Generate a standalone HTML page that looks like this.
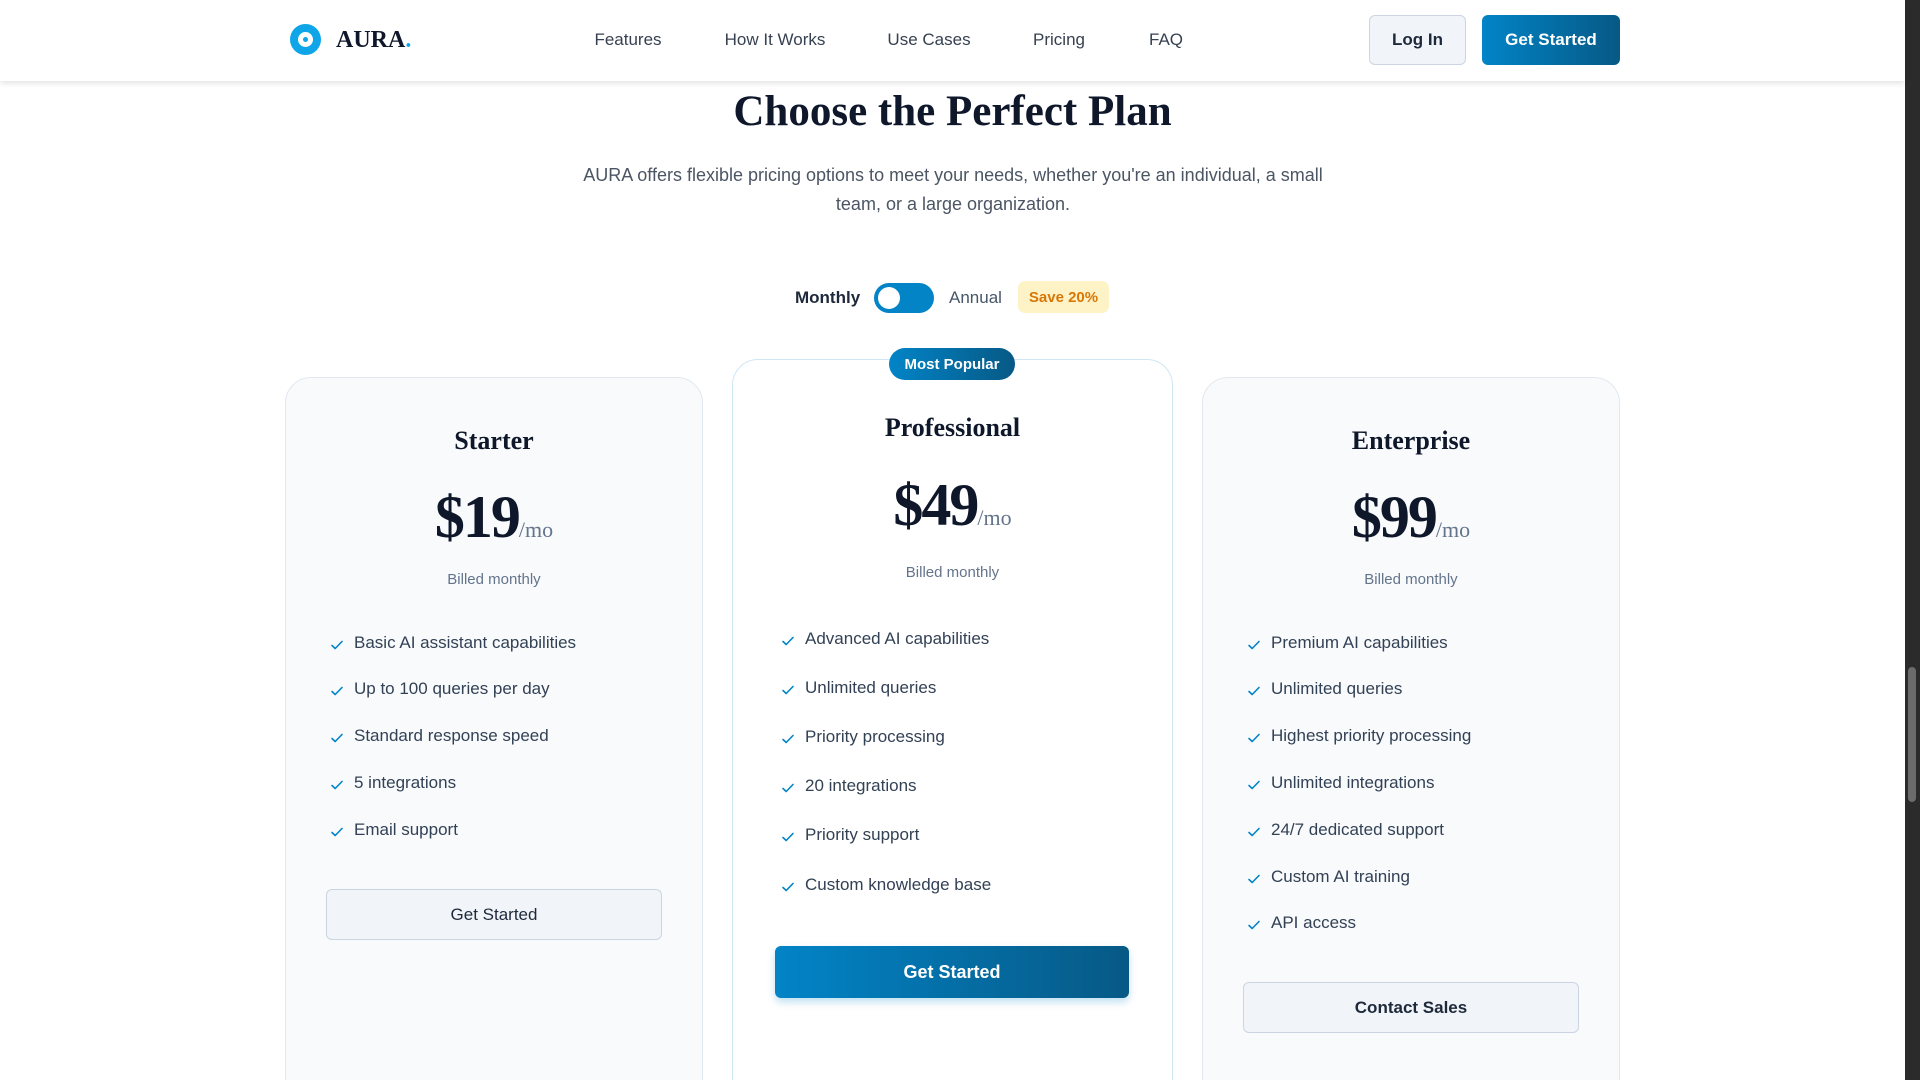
<!DOCTYPE html>
<html><head><meta charset="utf-8"><style>
*{box-sizing:border-box;margin:0;padding:0}
html,body{width:1920px;height:1080px;overflow:hidden}
body{background:#fff;font-family:"Liberation Sans",sans-serif;color:#0f172a}
#w{position:relative;width:1920px;height:1080px;overflow:hidden}
.a{position:absolute}
.serif{font-family:"Liberation Serif",serif;font-weight:bold}
nav{position:absolute;left:0;top:0;width:1905px;height:81px;background:#fff;box-shadow:0 2px 6px rgba(0,0,0,.12);z-index:2}
.nl{position:absolute;top:30px;font-size:17px;color:#374151;transform:translateX(-50%)}
.btn{position:absolute;display:flex;align-items:center;justify-content:center;font-size:17px;font-weight:bold;border-radius:6px}
.card{position:absolute;border:1px solid #e2e8f0;border-radius:26px;background:#f8fafc;height:900px}
.ct{position:absolute;width:100%;text-align:center}
.feat{position:absolute;font-size:17px;color:#334155;white-space:nowrap}
.feat svg{position:absolute;left:-24px;top:5px}
.price{font-family:"Liberation Serif",serif;font-weight:bold;font-size:60px;letter-spacing:-2px}
.price small{font-size:22px;font-weight:normal;color:#64748b;letter-spacing:0}
.bill{font-size:15px;color:#64748b}
</style></head><body><div id="w">
<nav>
<div class="a" style="left:290px;top:24px;width:31px;height:31px;border-radius:50%;background:#0ea5e9"></div>
<div class="a" style="left:298px;top:32px;width:15px;height:15px;border-radius:50%;background:#fff"></div>
<div class="a" style="left:303px;top:37px;width:5px;height:5px;border-radius:50%;background:#0ea5e9"></div>
<div class="a serif" style="left:336px;top:27px;font-size:24px;color:#0f172a">AURA<span style="color:#0ea5e9">.</span></div>
<div class="nl" style="left:628px">Features</div>
<div class="nl" style="left:775px">How It Works</div>
<div class="nl" style="left:929px">Use Cases</div>
<div class="nl" style="left:1059px">Pricing</div>
<div class="nl" style="left:1166px">FAQ</div>
<div class="btn" style="left:1369px;top:15px;width:97px;height:50px;background:#f1f5f9;border:1px solid #cbd5e1;color:#1e293b">Log In</div>
<div class="btn" style="left:1482px;top:15px;width:138px;height:50px;background:linear-gradient(90deg,#0284c7,#075985);color:#fff">Get Started</div>
</nav>
<div class="a" style="left:1905px;top:0;width:15px;height:1080px;background:#2b2b2b"></div>
<div class="a" style="left:1908px;top:667px;width:8px;height:135px;background:#6b6b6b;border-radius:4px"></div>

<div class="a serif" style="left:0;width:1905px;top:87px;text-align:center;font-size:43px;color:#0f172a">Choose the Perfect Plan</div>
<div class="a" style="left:568px;width:770px;top:161px;text-align:center;font-size:18px;line-height:29px;color:#4b5563">AURA offers flexible pricing options to meet your needs, whether you're an individual, a small<br>team, or a large organization.</div>

<div class="a" style="left:795px;top:288px;font-size:17px;font-weight:bold;color:#1e293b">Monthly</div>
<div class="a" style="left:874px;top:283px;width:60px;height:30px;border-radius:15px;background:#0284c7"></div>
<div class="a" style="left:878px;top:287px;width:22px;height:22px;border-radius:50%;background:#fff"></div>
<div class="a" style="left:949px;top:288px;font-size:17px;color:#475569">Annual</div>
<div class="a" style="left:1018px;top:281px;width:91px;height:32px;border-radius:7px;background:#fef3c7;color:#d97706;font-size:15px;font-weight:bold;display:flex;align-items:center;justify-content:center">Save 20%</div>

<div class="card" style="left:285px;top:377px;width:418px">
<div class="ct serif" style="top:48px;font-size:26px">Starter</div>
<div class="ct price" style="top:105px">$19<small>/mo</small></div>
<div class="ct bill" style="top:193px">Billed monthly</div>
</div>
<div class="card" style="left:732px;top:359px;width:441px;background:#fff;border-color:#cfe6f5">
<div class="ct serif" style="top:53px;font-size:26px">Professional</div>
<div class="ct price" style="top:111px">$49<small>/mo</small></div>
<div class="ct bill" style="top:204px">Billed monthly</div>
</div>
<div class="a" style="left:889px;top:348px;width:126px;height:32px;border-radius:16px;background:linear-gradient(90deg,#0284c7,#075985);color:#fff;font-size:15px;font-weight:bold;display:flex;align-items:center;justify-content:center">Most Popular</div>
<div class="card" style="left:1202px;top:377px;width:418px">
<div class="ct serif" style="top:48px;font-size:26px">Enterprise</div>
<div class="ct price" style="top:105px">$99<small>/mo</small></div>
<div class="ct bill" style="top:193px">Billed monthly</div>
</div>

<svg width="0" height="0" style="position:absolute"><defs><symbol id="ck" viewBox="0 0 14 14"><path d="M2 7.5l3.2 3L12 3.5" fill="none" stroke="#0284c7" stroke-width="1.6" stroke-linecap="round" stroke-linejoin="round"/></symbol></defs></svg>

<div class="feat" style="left:354px;top:633px"><svg width="14" height="14"><use href="#ck"/></svg>Basic AI assistant capabilities</div>
<div class="feat" style="left:354px;top:679px"><svg width="14" height="14"><use href="#ck"/></svg>Up to 100 queries per day</div>
<div class="feat" style="left:354px;top:726px"><svg width="14" height="14"><use href="#ck"/></svg>Standard response speed</div>
<div class="feat" style="left:354px;top:773px"><svg width="14" height="14"><use href="#ck"/></svg>5 integrations</div>
<div class="feat" style="left:354px;top:820px"><svg width="14" height="14"><use href="#ck"/></svg>Email support</div>
<div class="btn" style="left:326px;top:889px;width:336px;height:51px;background:#f1f5f9;border:1px solid #cbd5e1;color:#1e293b;font-weight:normal">Get Started</div>

<div class="feat" style="left:805px;top:629px"><svg width="14" height="14"><use href="#ck"/></svg>Advanced AI capabilities</div>
<div class="feat" style="left:805px;top:678px"><svg width="14" height="14"><use href="#ck"/></svg>Unlimited queries</div>
<div class="feat" style="left:805px;top:727px"><svg width="14" height="14"><use href="#ck"/></svg>Priority processing</div>
<div class="feat" style="left:805px;top:776px"><svg width="14" height="14"><use href="#ck"/></svg>20 integrations</div>
<div class="feat" style="left:805px;top:825px"><svg width="14" height="14"><use href="#ck"/></svg>Priority support</div>
<div class="feat" style="left:805px;top:875px"><svg width="14" height="14"><use href="#ck"/></svg>Custom knowledge base</div>
<div class="btn" style="left:775px;top:946px;width:354px;height:52px;background:linear-gradient(90deg,#0284c7,#075985);color:#fff;font-size:18px;box-shadow:0 4px 8px rgba(2,132,199,.25)">Get Started</div>

<div class="feat" style="left:1271px;top:633px"><svg width="14" height="14"><use href="#ck"/></svg>Premium AI capabilities</div>
<div class="feat" style="left:1271px;top:679px"><svg width="14" height="14"><use href="#ck"/></svg>Unlimited queries</div>
<div class="feat" style="left:1271px;top:726px"><svg width="14" height="14"><use href="#ck"/></svg>Highest priority processing</div>
<div class="feat" style="left:1271px;top:773px"><svg width="14" height="14"><use href="#ck"/></svg>Unlimited integrations</div>
<div class="feat" style="left:1271px;top:820px"><svg width="14" height="14"><use href="#ck"/></svg>24/7 dedicated support</div>
<div class="feat" style="left:1271px;top:867px"><svg width="14" height="14"><use href="#ck"/></svg>Custom AI training</div>
<div class="feat" style="left:1271px;top:913px"><svg width="14" height="14"><use href="#ck"/></svg>API access</div>
<div class="btn" style="left:1243px;top:982px;width:336px;height:51px;background:#f1f5f9;border:1px solid #cbd5e1;color:#1e293b">Contact Sales</div>
</div></body></html>
